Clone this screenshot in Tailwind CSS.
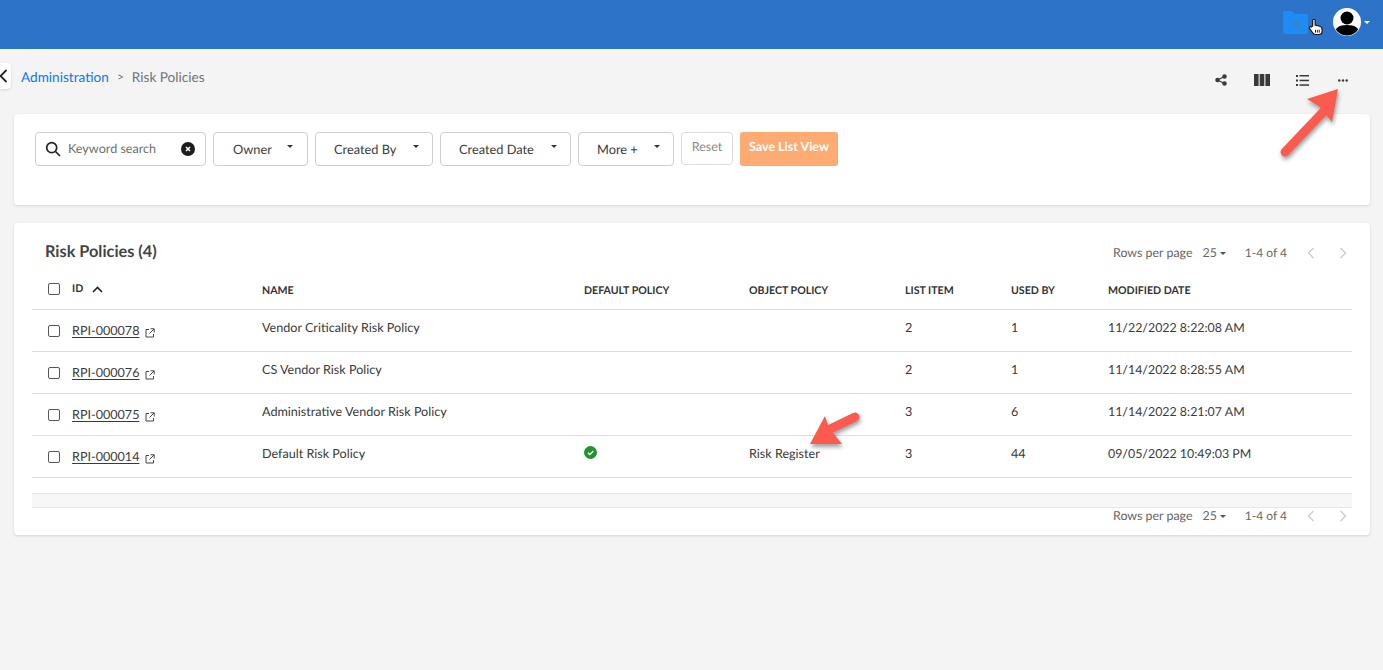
<!DOCTYPE html>
<html><head><meta charset="utf-8">
<script src="https://cdn.jsdelivr.net/npm/@tailwindcss/browser@4"></script>
</head>
<body class="m-0 bg-[#f4f4f4] font-['Lato','Noto_Sans',sans-serif] text-[#3c3c3c] overflow-hidden [text-rendering:geometricPrecision]">
<div class="relative w-[1383px] h-[670px] overflow-hidden">
  <!-- Top bar -->
  <header class="h-[49px] bg-[#2d74c9] flex items-center justify-end">
    <svg class="w-[25px] h-[23px] mb-[5px]" viewBox="0 0 25 23"><path d="M2 0h7l3 3h11a2 2 0 0 1 2 2v16a2 2 0 0 1-2 2H2a2 2 0 0 1-2-2V2a2 2 0 0 1 2-2z" fill="#1e8cf5"/><path d="M13 8v10M8 13h10" stroke="#3f7fc6" stroke-width="2"/></svg>
    <svg class="w-[15px] h-[19px] mr-[10px] mb-[-4px]" viewBox="0 0 16 19"><path d="M5 9V3a1.300 1.300 0 0 1 2.600 0v5l5 1.200c1.500.4 2.400 1.200 2.400 2.800v2.500c0 2-1.500 3.500-3.500 3.500H8c-1.500 0-2.300-.7-3-1.800L1.500 11.500c-.8-1.300.7-2.500 1.800-1.500z" fill="#fff" stroke="#111" stroke-width="1.200"/><path d="M8 13v3M10 13v3M12 13v3" stroke="#111"/></svg>
    <svg class="w-[28px] h-[28px] mb-[5px]" viewBox="0 0 28 28"><circle cx="14" cy="14" r="14" fill="#fff"/><clipPath id="c"><circle cx="14" cy="14" r="13.500"/></clipPath><g clip-path="url(#c)"><circle cx="14" cy="10" r="6.500" fill="#000"/><path d="M1 28c0-8 5-11 13-11s13 3 13 11z" fill="#000"/></g></svg>
    <span class="ml-[3px] mr-[13px] mb-[5px] w-0 h-0 border-x-[3px] border-x-transparent border-t-[3px] border-t-white"></span>
  </header>

  <!-- Breadcrumb row -->
  <div class="h-[65px] flex items-start relative">
    <div class="w-[11px] h-[26px] mt-[14px] bg-white rounded-r-[4px] shadow-sm flex items-center justify-end">
      <svg class="w-[11px] h-[14px]" viewBox="0 0 11 14"><path d="M6.500 1 .5 7l6 6" fill="none" stroke="#222" stroke-width="1.800"/></svg>
    </div>
    <nav class="ml-[10px] mt-[19px] text-[13.600px] leading-[18px] flex items-center">
      <span class="text-[#0d79f2]">Administration</span>
      <span class="ml-[8px] text-[#6c757d] text-[12px]">&gt;</span>
      <span class="ml-[8px] text-[#6c757d]">Risk Policies</span>
    </nav>
    <div class="ml-auto flex items-center mt-[25px] text-[#3a3a3a]">
      <svg class="w-[12px] h-[12px]" viewBox="0 0 24 24" fill="#3a3a3a"><circle cx="19" cy="5" r="4.500"/><circle cx="5" cy="12" r="4.500"/><circle cx="19" cy="19" r="4.500"/><path d="M5 12 19 5M5 12l14 7" stroke="#3a3a3a" stroke-width="2.500"/></svg>
      <svg class="ml-[27px] w-[16px] h-[12px]" viewBox="0 0 16 12" fill="#3a3a3a"><rect width="4.600" height="12"/><rect x="5.700" width="4.600" height="12"/><rect x="11.400" width="4.600" height="12"/></svg>
      <svg class="ml-[26px] w-[13px] h-[11px]" viewBox="0 0 13 11" fill="#3a3a3a"><rect width="2" height="2"/><rect x="3.500" width="9.500" height="1.500"/><rect y="4.500" width="2" height="2"/><rect x="3.500" y="4.700" width="9.500" height="1.500"/><rect y="9" width="2" height="2"/><rect x="3.500" y="9.300" width="9.500" height="1.500"/></svg>
      <svg class="ml-[29px] mr-[35px] w-[10px] h-[3px]" viewBox="0 0 10 3" fill="#3a3a3a"><circle cx="1.300" cy="1.500" r="1.200"/><circle cx="5" cy="1.500" r="1.200"/><circle cx="8.700" cy="1.500" r="1.200"/></svg>
    </div>
  </div>

  <!-- Filter card -->
  <section class="ml-[14px] mr-[13px] h-[91px] bg-white rounded-[4px] shadow-[0_1px_3px_rgba(0,0,0,0.12)] pl-[21px] pt-[18px] flex items-start gap-[7px] text-[12.800px]">
    <div class="w-[171px] h-[34px] border border-[#cfcfcf] rounded-[4px] flex items-center pl-[9px] pr-[10px]">
      <svg class="w-[16px] h-[16px] shrink-0" viewBox="0 0 16 16" fill="none" stroke="#222" stroke-width="1.700"><circle cx="6.700" cy="6.700" r="5"/><path d="m10.500 10.500 4.500 4.500"/></svg>
      <span class="ml-[7px] text-[#6f6f6f] leading-none text-[12.600px]">Keyword search</span>
      <svg class="ml-auto w-[14px] h-[14px]" viewBox="0 0 14 14"><circle cx="7" cy="7" r="7" fill="#1c1c1c"/><path d="m5 5 4 4M9 5 5 9" stroke="#fff" stroke-width="1.500"/></svg>
    </div>
    <div class="w-[95px] h-[34px] border border-[#cfcfcf] rounded-[4px] flex items-center pl-[19px] relative"><span class="mt-[2px]">Owner</span><span class="absolute left-[73px] top-[12px] w-0 h-0 border-x-[3px] border-x-transparent border-t-[3px] border-t-[#333]"></span></div>
    <div class="w-[118px] h-[34px] border border-[#cfcfcf] rounded-[4px] flex items-center pl-[18px] relative"><span class="mt-[2px]">Created By</span><span class="absolute left-[97px] top-[12px] w-0 h-0 border-x-[3px] border-x-transparent border-t-[3px] border-t-[#333]"></span></div>
    <div class="w-[131px] h-[34px] border border-[#cfcfcf] rounded-[4px] flex items-center pl-[18px] relative"><span class="mt-[2px]">Created Date</span><span class="absolute left-[110px] top-[12px] w-0 h-0 border-x-[3px] border-x-transparent border-t-[3px] border-t-[#333]"></span></div>
    <div class="w-[96px] h-[34px] border border-[#cfcfcf] rounded-[4px] flex items-center pl-[18px] relative"><span class="mt-[2px]">More +</span><span class="absolute left-[75px] top-[12px] w-0 h-0 border-x-[3px] border-x-transparent border-t-[3px] border-t-[#333]"></span></div>
    <div class="w-[52px] h-[33px] border border-[#dcdcdc] rounded-[4px] flex items-center justify-center text-[#8a8a8a] text-[12.500px]"><span class="mb-[3px]">Reset</span></div>
    <div class="w-[98px] h-[34px] bg-[#fdab73] rounded-[3px] flex items-center justify-center text-white font-bold text-[12.500px]"><span class="mb-[3px]">Save List View</span></div>
  </section>

  <!-- Table card -->
  <section class="ml-[14px] mr-[13px] mt-[18px] h-[312px] bg-white rounded-[4px] shadow-[0_1px_3px_rgba(0,0,0,0.12)] px-[18px]">
    <div class="h-[43px] pt-[19px] flex items-start">
      <h2 class="ml-[13px] text-[16.300px] leading-[20px] font-bold text-[#444]">Risk Policies (4)</h2>
      <div class="ml-auto flex items-center text-[12.400px] text-[#666] leading-[20px] mt-[1px]">
        <span>Rows per page</span><span class="ml-[10px]">25</span><span class="ml-[3px] w-0 h-0 border-x-[3px] border-x-transparent border-t-[3px] border-t-[#555]"></span>
        <span class="ml-[19px] text-[12px]">1-4 of 4</span>
        <svg class="ml-[20px] w-[8px] h-[12px]" viewBox="0 0 8 12" fill="none" stroke="#ccc" stroke-width="1.300"><path d="M6.500 1 1.500 6l5 5"/></svg>
        <svg class="ml-[24px] mr-[5px] w-[8px] h-[12px]" viewBox="0 0 8 12" fill="none" stroke="#ccc" stroke-width="1.300"><path d="m1.500 1 5 5-5 5"/></svg>
      </div>
    </div>

    <!-- Head -->
    <div class="h-[44px] flex items-start border-b border-[#dedede] text-[10.600px] font-bold text-[#333] leading-[14px]">
      <div class="w-[230px] pl-[16px] pt-[16px] flex items-center">
        <span class="w-[12px] h-[12px] border border-[#555] rounded-[2px]"></span>
        <span class="ml-[12px]">ID</span>
        <svg class="ml-[9px] w-[11px] h-[7px]" viewBox="0 0 11 7" fill="none" stroke="#222" stroke-width="1.600"><path d="m1 6 4.500-4.500L10 6"/></svg>
      </div>
      <div class="w-[322px] pt-[18px]">NAME</div>
      <div class="w-[165px] pt-[18px]">DEFAULT POLICY</div>
      <div class="w-[156px] pt-[18px]">OBJECT POLICY</div>
      <div class="w-[106px] pt-[18px]">LIST ITEM</div>
      <div class="w-[97px] pt-[18px]">USED BY</div>
      <div class="pt-[18px]">MODIFIED DATE</div>
    </div>

    <!-- Rows -->
    <div class="h-[42px] flex items-start border-b border-[#dedede] text-[12.600px] text-[#3a3a3a] leading-[16px]">
      <div class="w-[230px] pl-[16px] pt-[13px] flex items-center"><span class="w-[12px] h-[12px] border border-[#555] rounded-[2px]"></span><span class="ml-[12px] underline underline-offset-2">RPI-000078</span><svg class="ml-[6px] mt-[3px] w-[10px] h-[10px]" viewBox="0 0 10 10" fill="none" stroke="#444" stroke-width="1"><path d="M4 1.500H1v7.500h7.500V6M5.500.8h3.700v3.700M9 1 4.500 5.500"/></svg></div>
      <div class="w-[322px] pt-[10px]">Vendor Criticality Risk Policy</div>
      <div class="w-[165px] pt-[10px]"></div>
      <div class="w-[156px] pt-[10px]"></div>
      <div class="w-[106px] pt-[10px]">2</div>
      <div class="w-[97px] pt-[10px]">1</div>
      <div class="pt-[10px] text-[12.400px]">11/22/2022 8:22:08 AM</div>
    </div>
    <div class="h-[42px] flex items-start border-b border-[#dedede] text-[12.600px] text-[#3a3a3a] leading-[16px]">
      <div class="w-[230px] pl-[16px] pt-[13px] flex items-center"><span class="w-[12px] h-[12px] border border-[#555] rounded-[2px]"></span><span class="ml-[12px] underline underline-offset-2">RPI-000076</span><svg class="ml-[6px] mt-[3px] w-[10px] h-[10px]" viewBox="0 0 10 10" fill="none" stroke="#444" stroke-width="1"><path d="M4 1.500H1v7.500h7.500V6M5.500.8h3.700v3.700M9 1 4.500 5.500"/></svg></div>
      <div class="w-[322px] pt-[10px]">CS Vendor Risk Policy</div>
      <div class="w-[165px] pt-[10px]"></div>
      <div class="w-[156px] pt-[10px]"></div>
      <div class="w-[106px] pt-[10px]">2</div>
      <div class="w-[97px] pt-[10px]">1</div>
      <div class="pt-[10px] text-[12.400px]">11/14/2022 8:28:55 AM</div>
    </div>
    <div class="h-[42px] flex items-start border-b border-[#dedede] text-[12.600px] text-[#3a3a3a] leading-[16px]">
      <div class="w-[230px] pl-[16px] pt-[13px] flex items-center"><span class="w-[12px] h-[12px] border border-[#555] rounded-[2px]"></span><span class="ml-[12px] underline underline-offset-2">RPI-000075</span><svg class="ml-[6px] mt-[3px] w-[10px] h-[10px]" viewBox="0 0 10 10" fill="none" stroke="#444" stroke-width="1"><path d="M4 1.500H1v7.500h7.500V6M5.500.8h3.700v3.700M9 1 4.500 5.500"/></svg></div>
      <div class="w-[322px] pt-[10px]">Administrative Vendor Risk Policy</div>
      <div class="w-[165px] pt-[10px]"></div>
      <div class="w-[156px] pt-[10px]"></div>
      <div class="w-[106px] pt-[10px]">3</div>
      <div class="w-[97px] pt-[10px]">6</div>
      <div class="pt-[10px] text-[12.400px]">11/14/2022 8:21:07 AM</div>
    </div>
    <div class="h-[42px] flex items-start border-b border-[#dedede] text-[12.600px] text-[#3a3a3a] leading-[16px]">
      <div class="w-[230px] pl-[16px] pt-[13px] flex items-center"><span class="w-[12px] h-[12px] border border-[#555] rounded-[2px]"></span><span class="ml-[12px] underline underline-offset-2">RPI-000014</span><svg class="ml-[6px] mt-[3px] w-[10px] h-[10px]" viewBox="0 0 10 10" fill="none" stroke="#444" stroke-width="1"><path d="M4 1.500H1v7.500h7.500V6M5.500.8h3.700v3.700M9 1 4.500 5.500"/></svg></div>
      <div class="w-[322px] pt-[10px]">Default Risk Policy</div>
      <div class="w-[165px] pt-[10px]"><svg class="w-[13px] h-[13px]" viewBox="0 0 13 13"><circle cx="6.500" cy="6.500" r="6.500" fill="#23922f"/><path d="m3.800 6.800 2 1.800 3.500-3.600" fill="none" stroke="#fff" stroke-width="1.400"/></svg></div>
      <div class="w-[156px] pt-[10px]">Risk Register</div>
      <div class="w-[106px] pt-[10px]">3</div>
      <div class="w-[97px] pt-[10px]">44</div>
      <div class="pt-[10px] text-[12.400px]">09/05/2022 10:49:03 PM</div>
    </div>

    <!-- Scrollbar track -->
    <div class="mt-[15px] h-[15px] bg-[#f7f7f7] border-y border-[#e6e6e6]"></div>

    <!-- Footer pager -->
    <div class="flex justify-end items-center text-[12.400px] text-[#666] leading-[20px] mt-[-2px]">
      <span>Rows per page</span><span class="ml-[10px]">25</span><span class="ml-[3px] w-0 h-0 border-x-[3px] border-x-transparent border-t-[3px] border-t-[#555]"></span>
      <span class="ml-[19px] text-[12px]">1-4 of 4</span>
      <svg class="ml-[20px] w-[8px] h-[12px]" viewBox="0 0 8 12" fill="none" stroke="#ccc" stroke-width="1.300"><path d="M6.500 1 1.500 6l5 5"/></svg>
      <svg class="ml-[24px] mr-[5px] w-[8px] h-[12px]" viewBox="0 0 8 12" fill="none" stroke="#ccc" stroke-width="1.300"><path d="m1.500 1 5 5-5 5"/></svg>
    </div>
  </section>

  <!-- Annotation arrows -->
  <svg class="absolute left-0 top-0 pointer-events-none [filter:drop-shadow(1px_3px_2px_rgba(0,0,0,0.38))]" width="1383" height="670" viewBox="0 0 1383 670">
    <g fill="#fb5b4f">
      <path d="M1285 152 1324 111" stroke="#fb5b4f" stroke-width="9" stroke-linecap="round"/><path d="M1338 89 1307 99 1319 106 1332 122z"/>
      <path d="M855 417 826 431" stroke="#fb5b4f" stroke-width="9" stroke-linecap="round"/><path d="M810 444 825 416 829 428 842 444z"/>
    </g>
  </svg>
</div>
</body></html>
